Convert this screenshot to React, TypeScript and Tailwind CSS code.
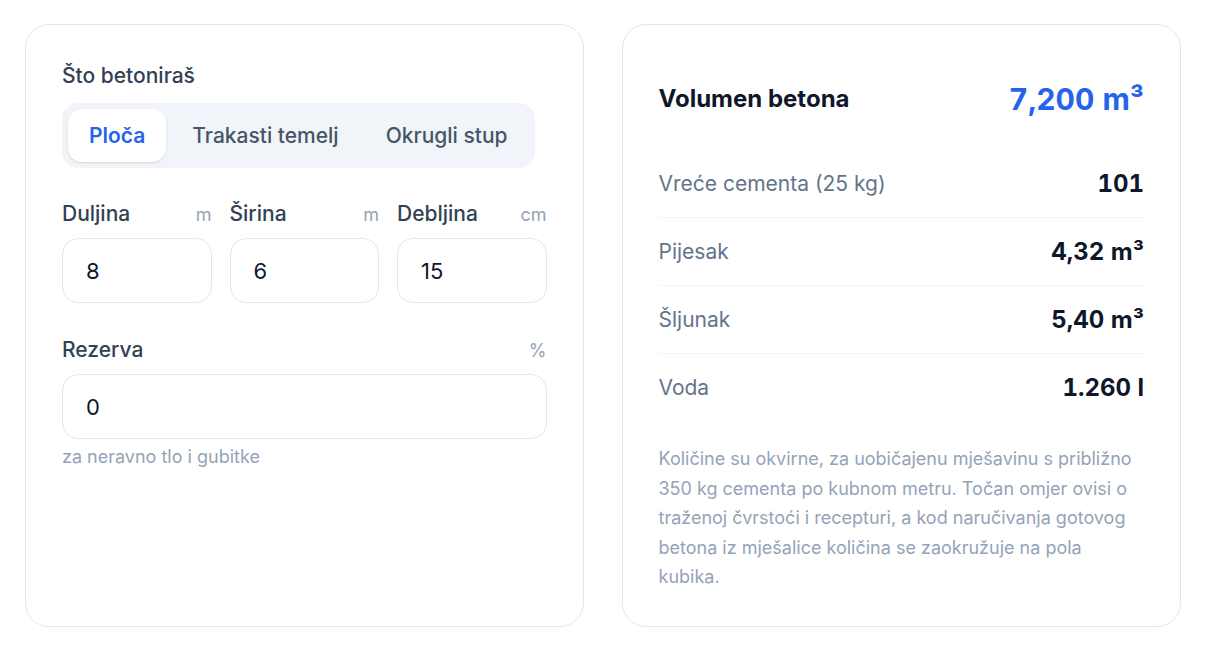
import { useState } from 'react';

const tabs = ['Ploča', 'Trakasti temelj', 'Okrugli stup'];

const fields = [
  { label: 'Duljina', unit: 'm', value: '8' },
  { label: 'Širina', unit: 'm', value: '6' },
  { label: 'Debljina', unit: 'cm', value: '15' },
];

const rows = [
  { label: 'Vreće cementa (25 kg)', value: '101' },
  { label: 'Pijesak', value: '4,32 m³' },
  { label: 'Šljunak', value: '5,40 m³' },
  { label: 'Voda', value: '1.260 l' },
];

const Field = ({ label, unit, value }: { label: string; unit: string; value: string }) => (
  <div className="flex flex-col">
    <div className="flex h-[22px] items-center justify-between">
      <span className="text-[21px] font-medium text-[#334155]">{label}</span>
      <span className="text-[18px] text-[#94a3b8]">{unit}</span>
    </div>
    <input
      defaultValue={value}
      className="mt-[13px] h-[65px] w-full rounded-[16px] border border-[#e2e8f0] bg-white px-[23px] text-[22px] text-[#0f172a] outline-none"
    />
  </div>
);

const App = () => {
  const [active, setActive] = useState(0);

  return (
    <div
      className="flex min-h-screen gap-[38px] bg-white px-[25px] pt-[24px]"
      style={{ fontFamily: 'Inter, "Noto Sans", sans-serif' }}
    >
      <div className="flex h-[603px] w-[559px] flex-col rounded-[24px] border border-[#e5e7eb] bg-white px-[36px] pt-[37px]">
        <div className="text-[21px] font-medium leading-[28px] text-[#334155]">Što betoniraš</div>

        <div className="mt-[13px] inline-flex gap-[5px] self-start rounded-[16px] bg-[#f1f5f9] p-[6px]">
          {tabs.map((t, i) => (
            <button
              key={t}
              onClick={() => setActive(i)}
              className={
                i === active
                  ? 'h-[53px] rounded-[14px] bg-white px-[21px] text-[21px] font-semibold text-[#2563eb] shadow-sm'
                  : 'h-[53px] rounded-[14px] px-[21px] text-[21px] font-medium text-[#475569]'
              }
            >
              {t}
            </button>
          ))}
        </div>

        <div className="mt-[35px] grid grid-cols-3 gap-[18px]">
          {fields.map((f) => (
            <Field key={f.label} {...f} />
          ))}
        </div>

        <div className="mt-[36px]">
          <Field label="Rezerva" unit="%" value="0" />
        </div>
        <div className="mt-[8px] text-[18px] leading-[20px] text-[#94a3b8]">za neravno tlo i gubitke</div>
      </div>

      <div className="flex h-[603px] w-[560px] flex-col rounded-[24px] border border-[#e5e7eb] bg-white px-[36px] pt-[37px]">
        <div className="flex h-[74px] items-center justify-between">
          <span className="text-[24px] font-bold text-[#0f172a]">Volumen betona</span>
          <span className="text-[30px] font-bold tabular-nums text-[#2563eb]">7,200 m³</span>
        </div>

        <div className="mt-[14px] flex flex-col">
          {rows.map((r, i) => (
            <div
              key={r.label}
              className={
                i < rows.length - 1
                  ? 'flex h-[68px] items-center justify-between border-b border-[#f1f5f9]'
                  : 'flex h-[68px] items-center justify-between'
              }
            >
              <span className="text-[21px] text-[#64748b]">{r.label}</span>
              <span className="text-[24px] font-bold tabular-nums text-[#0f172a]">{r.value}</span>
            </div>
          ))}
        </div>

        <p className="mt-[22px] text-[18px] leading-[29.5px] text-[#94a3b8]">
          Količine su okvirne, za uobičajenu mješavinu s približno 350 kg cementa po kubnom metru. Točan omjer ovisi
          o traženoj čvrstoći i recepturi, a kod naručivanja gotovog betona iz mješalice količina se zaokružuje na
          pola kubika.
        </p>
      </div>
    </div>
  );
};

export default App;
